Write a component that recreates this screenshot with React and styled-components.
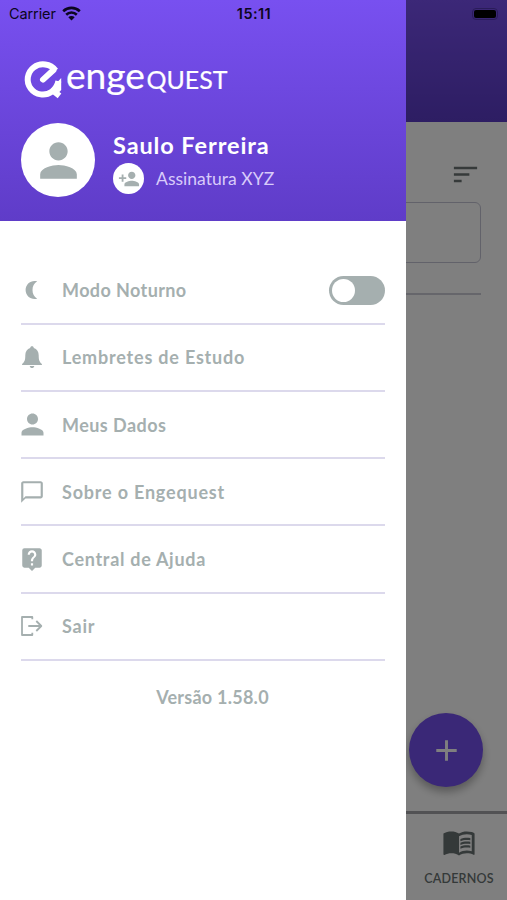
import React, { useState } from 'react'
import styled, { createGlobalStyle } from 'styled-components'
import {
  MdPerson,
  MdPersonAdd,
  MdChatBubbleOutline,
  MdLiveHelp,
  MdSort,
  MdMenuBook,
  MdAdd,
} from 'react-icons/md'

const GlobalStyle = createGlobalStyle`
  * {
    box-sizing: border-box;
  }
  body {
    margin: 0;
    background: #fff;
    font-family: Lato, 'Open Sans', sans-serif;
  }
  svg {
    display: block;
    flex-shrink: 0;
  }
`

const Phone = styled.div`
  position: relative;
  width: 507px;
  height: 900px;
  overflow: hidden;
`

const StatusBar = styled.div`
  position: absolute;
  z-index: 3;
  top: 0;
  left: 0;
  right: 0;
  height: 27px;
  padding: 0 8px 0 9px;
  display: grid;
  grid-template-columns: 1fr auto 1fr;
  align-items: center;
  color: #0c0620;
  font-family: Inter, sans-serif;
  font-size: 14.5px;
`

const Carrier = styled.div`
  display: flex;
  align-items: center;
  gap: 6px;
  span {
    display: block;
    width: 47px;
    letter-spacing: -0.1px;
    white-space: nowrap;
  }
`

const Clock = styled.div`
  font-weight: 600;
  letter-spacing: 0.45px;
`

const Battery = styled.div`
  justify-self: end;
  width: 26px;
  height: 12px;
  margin-right: 1px;
  border: 1px solid #2a1c5a;
  border-radius: 4px;
  padding: 1px;
  &::before {
    content: '';
    display: block;
    height: 8px;
    background: #000;
    border-radius: 2px;
  }
`

/* screen behind the drawer */
const Screen = styled.div`
  display: flex;
  flex-direction: column;
  height: 900px;
  background: #fff;
`

const ScreenHeader = styled.div`
  height: 122px;
  background: linear-gradient(#7850f0, #5b3bc6);
`

const ScreenBody = styled.div`
  flex: 1;
  display: flex;
  flex-direction: column;
  padding: 37px 26px 24px 21px;
`

const SortButton = styled.div`
  align-self: flex-end;
  color: #6d7575;
  height: 43px;
`

const Card = styled.div`
  height: 61px;
  border: 1.5px solid #c4c4d4;
  border-radius: 6px;
`

const Line = styled.div`
  height: 2px;
  margin-top: 30px;
  background: #cccdd6;
`

const Fab = styled.div`
  align-self: flex-end;
  margin-top: auto;
  margin-right: -2px;
  width: 74px;
  height: 74px;
  border-radius: 50%;
  background: #7550ee;
  color: #fff;
  display: flex;
  align-items: center;
  justify-content: center;
  box-shadow: 0 5px 9px rgba(0, 0, 0, 0.3);
`

const TabBar = styled.div`
  display: flex;
  justify-content: flex-end;
  height: 89px;
  border-top: 3px solid #a5a5a8;
`

const Tab = styled.div`
  width: 96px;
  display: flex;
  flex-direction: column;
  align-items: center;
  padding-top: 11px;
  color: #697272;
  font-size: 12.5px;
  font-weight: 600;
  span {
    margin-top: 12px;
    letter-spacing: 0.2px;
  }
`

const Overlay = styled.div`
  position: absolute;
  inset: 0;
  z-index: 1;
  background: rgba(0, 0, 0, 0.5);
`

const DrawerPanel = styled.div`
  position: absolute;
  z-index: 2;
  top: 0;
  left: 0;
  bottom: 0;
  width: 406px;
  background: #fff;
`

const DrawerHeader = styled.div`
  height: 221px;
  padding: 51px 21px 0;
  background: linear-gradient(#7850f0, #5f3cc8);
`

const Profile = styled.div`
  display: flex;
  margin-top: 16px;
`

const Avatar = styled.div`
  width: ${props => props.size}px;
  height: ${props => props.size}px;
  flex-shrink: 0;
  border-radius: 50%;
  background: #fff;
  color: #a5afaf;
  display: flex;
  align-items: center;
  justify-content: center;
`

const ProfileInfo = styled.div`
  margin-left: 18px;
  padding-top: 8px;
`

const Name = styled.div`
  color: #fff;
  font-size: 23.5px;
  line-height: 28px;
  font-weight: 700;
  letter-spacing: 0.9px;
  white-space: nowrap;
`

const Plan = styled.div`
  display: flex;
  align-items: center;
  gap: 12px;
  margin-top: 4px;
  color: #d8cbfa;
  font-size: 17.5px;
  letter-spacing: 0.03px;
  white-space: nowrap;
`

const Menu = styled.div`
  padding: 36.6px 21px 0;
`

const MenuRow = styled.div`
  display: flex;
  align-items: center;
  height: 67.2px;
  border-bottom: 2px solid #dcd9ec;
`

const IconBox = styled.div`
  display: flex;
  justify-content: center;
  width: 22px;
  color: #a5afaf;
`

const Label = styled.div`
  flex: 1;
  margin-left: 19px;
  color: #a5afaf;
  font-size: 18px;
  font-weight: 700;
  letter-spacing: ${props => props.spacing}px;
`

const Switch = styled.div`
  width: 56px;
  height: 29px;
  padding: 3px;
  border-radius: 15px;
  background: ${props => (props.on ? '#7550ee' : '#a5afaf')};
  display: flex;
  justify-content: ${props => (props.on ? 'flex-end' : 'flex-start')};
  cursor: pointer;
  &::before {
    content: '';
    width: 23px;
    height: 23px;
    border-radius: 50%;
    background: #fff;
  }
`

const Version = styled.div`
  margin-top: 24px;
  padding-left: 19px;
  text-align: center;
  color: #a5afaf;
  font-size: 18px;
  line-height: 24px;
  font-weight: 700;
  letter-spacing: 0.25px;
`

const Wifi = () => (
  <svg width="19" height="15" viewBox="0 0 19 15" fill="none" stroke="#0c0620" strokeWidth="2.6">
    <path d="M1.2 5.2a12 12 0 0 1 16.6 0" />
    <path d="M4.2 8.7a7.6 7.6 0 0 1 10.6 0" />
    <path d="M6.3 11.2a4.6 4.6 0 0 1 6.4 0L9.5 14.6z" fill="#0c0620" stroke="none" />
  </svg>
)

const Logo = () => (
  <svg width="210" height="56" viewBox="0 -8 210 56" fill="none">
    <g stroke="#fff" strokeWidth="6">
      <path d="M22 20.6L32.5 11" strokeLinecap="round" />
      <path d="M34.6 11.5C29.5 4.7 19.5 3.4 12.8 8.3 6 13.3 4.7 22.8 9.7 29.5c5 6.7 14.500 8 21.200 3.100 3.700-2.800 5.700-6.600 6.500-10.500" />
      <path d="M31 31l7.500 5.800" />
    </g>
    <path d="M40.200 19v12l-2.800 3-7-4.500c3.200-2.500 5.200-6 9.800-10.500z" fill="#fff" />
    <g fill="#fff" stroke="#fff" strokeWidth="0.2" fontFamily="Lato, sans-serif">
      <text x="45" y="30" fontSize="36" textLength="79" lengthAdjust="spacingAndGlyphs">enge</text>
      <text x="125.5" y="30" fontSize="25.5" textLength="81" lengthAdjust="spacingAndGlyphs">QUEST</text>
    </g>
  </svg>
)

const Moon = () => (
  <svg width="22" height="22" viewBox="0 0 22 22" fill="currentColor">
    <path d="M16.2 2.3C10 .7 4.6 5 4.6 11s5.4 10.300 11.600 8.700C13 17.800 11.500 14.700 11.500 11s1.500-6.800 4.700-8.700z" />
  </svg>
)

const Bell = () => (
  <svg width="22" height="24" viewBox="0 0 22 24" fill="currentColor">
    <path d="M11 1.200c-1.100 0-1.700.6-1.800 1.700C6 3.900 4.300 6.500 4.300 10.200c0 4.900-.8 6.700-3.200 8.700v1h19.800v-1c-2.400-2-3.200-3.800-3.200-8.700 0-3.700-1.700-6.300-4.900-7.300-.1-1.100-.7-1.700-1.800-1.700zM8.700 21c.2 1.300 1.100 2.100 2.300 2.100s2.100-.8 2.300-2.100z" />
  </svg>
)

const Exit = () => (
  <svg width="22" height="22" viewBox="0 0 22 22" fill="none" stroke="currentColor" strokeWidth="1.8" strokeLinejoin="round">
    <path d="M11.3 4.3V2H1v18h10.3v-2.3" />
    <path d="M7.3 11h13M15.3 6l5 5-5 5" />
  </svg>
)

const items = [
  { label: 'Modo Noturno', icon: <Moon />, toggle: true, spacing: 0.4 },
  { label: 'Lembretes de Estudo', icon: <Bell />, spacing: 0.8 },
  { label: 'Meus Dados', icon: <MdPerson size={33} />, spacing: 0.45 },
  { label: 'Sobre o Engequest', icon: <MdChatBubbleOutline size={26} />, spacing: 0.8 },
  { label: 'Central de Ajuda', icon: <MdLiveHelp size={26} />, spacing: 0.7 },
  { label: 'Sair', icon: <Exit />, spacing: 0.8 },
]

export default function App() {
  const [night, setNight] = useState(false)

  return (
    <Phone>
      <GlobalStyle />
      <StatusBar>
        <Carrier>
          <span>Carrier</span>
          <Wifi />
        </Carrier>
        <Clock>15:11</Clock>
        <Battery />
      </StatusBar>

      <Screen>
        <ScreenHeader />
        <ScreenBody>
          <SortButton>
            <MdSort size={31} />
          </SortButton>
          <Card />
          <Line />
          <Fab>
            <MdAdd size={35} />
          </Fab>
        </ScreenBody>
        <TabBar>
          <Tab>
            <MdMenuBook size={34} />
            <span>CADERNOS</span>
          </Tab>
        </TabBar>
      </Screen>

      <Overlay />

      <DrawerPanel>
        <DrawerHeader>
          <Logo />
          <Profile>
            <Avatar size={74}>
              <MdPerson size={55} />
            </Avatar>
            <ProfileInfo>
              <Name>Saulo Ferreira</Name>
              <Plan>
                <Avatar size={31}>
                  <MdPersonAdd size={22} />
                </Avatar>
                Assinatura XYZ
              </Plan>
            </ProfileInfo>
          </Profile>
        </DrawerHeader>
        <Menu>
          {items.map(item => (
            <MenuRow key={item.label}>
              <IconBox>{item.icon}</IconBox>
              <Label spacing={item.spacing}>{item.label}</Label>
              {item.toggle && <Switch on={night} onClick={() => setNight(!night)} />}
            </MenuRow>
          ))}
          <Version>Versão 1.58.0</Version>
        </Menu>
      </DrawerPanel>
    </Phone>
  )
}
